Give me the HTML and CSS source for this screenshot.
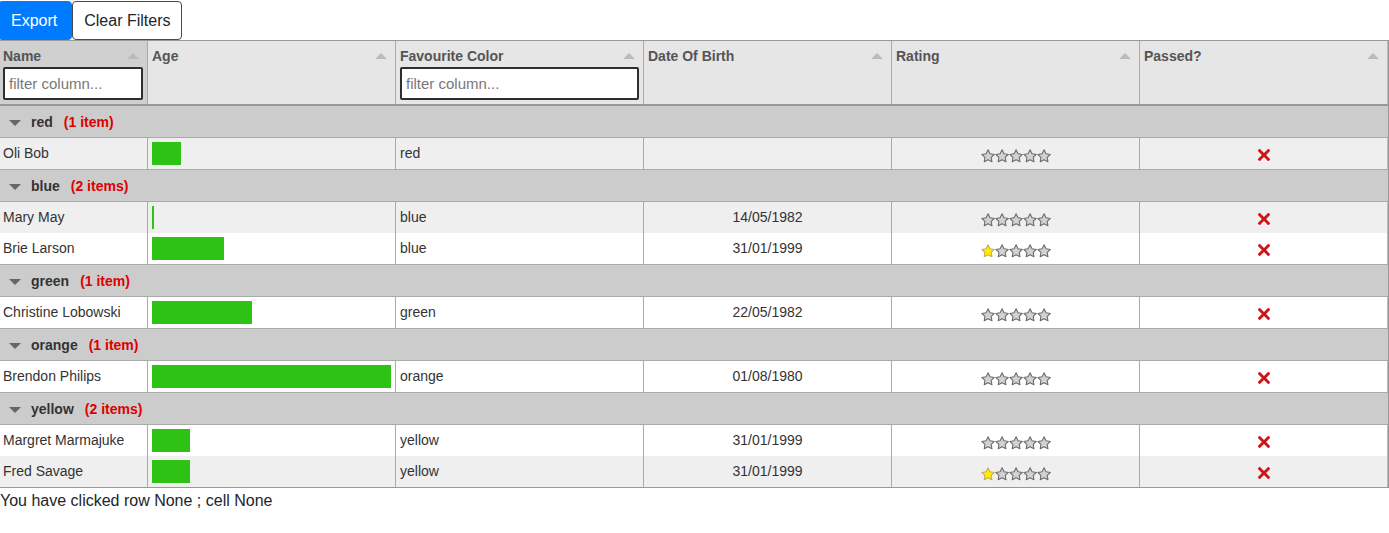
FILE: index.html
```html
<!DOCTYPE html>
<html lang="en">
<head>
<meta charset="utf-8">
<title>Tabulator grouped table</title>
<link rel="stylesheet" href="styles.css">
</head>
<body>
<svg class="defs" width="0" height="0" aria-hidden="true">
  <symbol id="star-off" viewBox="0 0 512 512">
    <polygon fill="#D2D2D2" stroke="#686868" stroke-width="37.6152" stroke-linecap="round" stroke-linejoin="round" points="259.216,29.942 330.27,173.919 489.16,197.007 374.185,309.08 401.33,467.31 259.216,392.612 117.104,467.31 144.25,309.08 29.274,197.007 188.165,173.919"/>
  </symbol>
  <symbol id="star-on" viewBox="0 0 512 512">
    <polygon fill="#FFEA00" stroke="#C1AB60" stroke-width="37.6152" stroke-linecap="round" stroke-linejoin="round" points="259.216,29.942 330.27,173.919 489.16,197.007 374.185,309.08 401.33,467.31 259.216,392.612 117.104,467.31 144.25,309.08 29.274,197.007 188.165,173.919"/>
  </symbol>
  <symbol id="cross" viewBox="0 0 24 24">
    <path fill="#CE1515" d="M22.245,4.015c0.313,0.313,0.313,0.826,0,1.139l-6.276,6.27c-0.313,0.312-0.313,0.826,0,1.14l6.273,6.272c0.313,0.313,0.313,0.826,0,1.14l-2.285,2.277c-0.314,0.312-0.828,0.312-1.142,0l-6.271-6.271c-0.313-0.313-0.828-0.313-1.141,0l-6.276,6.267c-0.313,0.313-0.828,0.313-1.141,0l-2.282-2.28c-0.313-0.313-0.313-0.826,0-1.14l6.278-6.269c0.313-0.312,0.313-0.826,0-1.14L1.709,5.147c-0.314-0.313-0.314-0.827,0-1.14l2.284-2.278C4.308,1.417,4.821,1.417,5.135,1.73L11.405,8c0.314,0.314,0.828,0.314,1.141,0.001l6.276-6.267c0.312-0.312,0.826-0.312,1.141,0L22.245,4.015z"/>
  </symbol>
</svg>

<div class="page">
  <div class="toolbar">
    <button class="btn btn-primary">Export</button>
    <button class="btn btn-outline">Clear Filters</button>
  </div>

  <div class="table">
    <div class="header">
      <div class="hcol hover">
        <div class="htitle"><span>Name</span><span class="sort"></span></div>
        <input class="hfilter" type="text" placeholder="filter column...">
      </div>
      <div class="hcol">
        <div class="htitle"><span>Age</span><span class="sort"></span></div>
      </div>
      <div class="hcol">
        <div class="htitle"><span>Favourite Color</span><span class="sort"></span></div>
        <input class="hfilter" type="text" placeholder="filter column...">
      </div>
      <div class="hcol">
        <div class="htitle"><span>Date Of Birth</span><span class="sort"></span></div>
      </div>
      <div class="hcol">
        <div class="htitle"><span>Rating</span><span class="sort"></span></div>
      </div>
      <div class="hcol">
        <div class="htitle"><span>Passed?</span><span class="sort"></span></div>
      </div>
    </div>

    <!-- red -->
    <div class="group"><span class="gtoggle"></span><span class="gname">red</span><span class="gcount">(1 item)</span></div>
    <div class="row alt last">
      <div class="cell">Oli Bob</div>
      <div class="cell bar-cell"><div class="bar" style="width:12%"></div></div>
      <div class="cell">red</div>
      <div class="cell center"></div>
      <div class="cell center stars">
        <svg class="star"><use href="#star-off"/></svg><svg class="star"><use href="#star-off"/></svg><svg class="star"><use href="#star-off"/></svg><svg class="star"><use href="#star-off"/></svg><svg class="star"><use href="#star-off"/></svg>
      </div>
      <div class="cell center tick"><svg class="cross"><use href="#cross"/></svg></div>
    </div>

    <!-- blue -->
    <div class="group"><span class="gtoggle"></span><span class="gname">blue</span><span class="gcount">(2 items)</span></div>
    <div class="row alt">
      <div class="cell">Mary May</div>
      <div class="cell bar-cell"><div class="bar" style="width:1%"></div></div>
      <div class="cell">blue</div>
      <div class="cell center">14/05/1982</div>
      <div class="cell center stars">
        <svg class="star"><use href="#star-off"/></svg><svg class="star"><use href="#star-off"/></svg><svg class="star"><use href="#star-off"/></svg><svg class="star"><use href="#star-off"/></svg><svg class="star"><use href="#star-off"/></svg>
      </div>
      <div class="cell center tick"><svg class="cross"><use href="#cross"/></svg></div>
    </div>
    <div class="row last">
      <div class="cell">Brie Larson</div>
      <div class="cell bar-cell"><div class="bar" style="width:30%"></div></div>
      <div class="cell">blue</div>
      <div class="cell center">31/01/1999</div>
      <div class="cell center stars">
        <svg class="star"><use href="#star-on"/></svg><svg class="star"><use href="#star-off"/></svg><svg class="star"><use href="#star-off"/></svg><svg class="star"><use href="#star-off"/></svg><svg class="star"><use href="#star-off"/></svg>
      </div>
      <div class="cell center tick"><svg class="cross"><use href="#cross"/></svg></div>
    </div>

    <!-- green -->
    <div class="group"><span class="gtoggle"></span><span class="gname">green</span><span class="gcount">(1 item)</span></div>
    <div class="row last">
      <div class="cell">Christine Lobowski</div>
      <div class="cell bar-cell"><div class="bar" style="width:42%"></div></div>
      <div class="cell">green</div>
      <div class="cell center">22/05/1982</div>
      <div class="cell center stars">
        <svg class="star"><use href="#star-off"/></svg><svg class="star"><use href="#star-off"/></svg><svg class="star"><use href="#star-off"/></svg><svg class="star"><use href="#star-off"/></svg><svg class="star"><use href="#star-off"/></svg>
      </div>
      <div class="cell center tick"><svg class="cross"><use href="#cross"/></svg></div>
    </div>

    <!-- orange -->
    <div class="group"><span class="gtoggle"></span><span class="gname">orange</span><span class="gcount">(1 item)</span></div>
    <div class="row last">
      <div class="cell">Brendon Philips</div>
      <div class="cell bar-cell"><div class="bar" style="width:100%"></div></div>
      <div class="cell">orange</div>
      <div class="cell center">01/08/1980</div>
      <div class="cell center stars">
        <svg class="star"><use href="#star-off"/></svg><svg class="star"><use href="#star-off"/></svg><svg class="star"><use href="#star-off"/></svg><svg class="star"><use href="#star-off"/></svg><svg class="star"><use href="#star-off"/></svg>
      </div>
      <div class="cell center tick"><svg class="cross"><use href="#cross"/></svg></div>
    </div>

    <!-- yellow -->
    <div class="group"><span class="gtoggle"></span><span class="gname">yellow</span><span class="gcount">(2 items)</span></div>
    <div class="row">
      <div class="cell">Margret Marmajuke</div>
      <div class="cell bar-cell"><div class="bar" style="width:16%"></div></div>
      <div class="cell">yellow</div>
      <div class="cell center">31/01/1999</div>
      <div class="cell center stars">
        <svg class="star"><use href="#star-off"/></svg><svg class="star"><use href="#star-off"/></svg><svg class="star"><use href="#star-off"/></svg><svg class="star"><use href="#star-off"/></svg><svg class="star"><use href="#star-off"/></svg>
      </div>
      <div class="cell center tick"><svg class="cross"><use href="#cross"/></svg></div>
    </div>
    <div class="row alt">
      <div class="cell">Fred Savage</div>
      <div class="cell bar-cell"><div class="bar" style="width:16%"></div></div>
      <div class="cell">yellow</div>
      <div class="cell center">31/01/1999</div>
      <div class="cell center stars">
        <svg class="star"><use href="#star-on"/></svg><svg class="star"><use href="#star-off"/></svg><svg class="star"><use href="#star-off"/></svg><svg class="star"><use href="#star-off"/></svg><svg class="star"><use href="#star-off"/></svg>
      </div>
      <div class="cell center tick"><svg class="cross"><use href="#cross"/></svg></div>
    </div>
  </div>

  <div class="status">You have clicked row None ; cell None</div>
</div>
</body>
</html>
```

FILE: styles.css
```css
* {
  box-sizing: border-box;
}

html, body {
  margin: 0;
  padding: 0;
  background: #fff;
}

body {
  font-family: "Liberation Sans", Arial, Helvetica, sans-serif;
  font-size: 16px;
  line-height: 1.5;
  color: #212529;
  overflow: hidden;
}

.defs {
  position: absolute;
  width: 0;
  height: 0;
  overflow: hidden;
}

.page {
  margin-left: -2px;
  width: 1391px;
}

/* toolbar */
.toolbar {
  display: flex;
  padding-top: 1px;
}

.btn {
  font-family: inherit;
  font-size: 16px;
  line-height: 24px;
  height: 39px;
  padding: 6px 12px;
  border-radius: 4px;
  margin: 0;
  cursor: pointer;
}

.btn-primary {
  background: #007bff;
  border: 1px solid #007bff;
  color: #fff;
  padding-right: 14px;
}

.btn-outline {
  background: #fff;
  border: 1px solid #4a4a4a;
  color: #212529;
  padding-left: 11px;
  padding-right: 11px;
}

/* table */
.table {
  border: 1px solid #999;
  background: #fff;
  font-size: 14px;
  line-height: 17px;
  color: #333;
}

.header {
  display: grid;
  grid-template-columns: 149px repeat(5, 248px);
  height: 65px;
  background: #e6e6e6;
  border-bottom: 2px solid #999;
  color: #555;
  font-weight: bold;
}

.hcol {
  border-right: 1px solid #aaa;
  padding: 7px 4px 3px 4px;
  display: flex;
  flex-direction: column;
}

.hcol:last-child {
  border-right: 1px solid #bbb;
}

.hcol.hover {
  background: #d0d0d0;
}

.htitle {
  display: flex;
  justify-content: space-between;
  align-items: center;
  height: 17px;
}

.sort {
  width: 0;
  height: 0;
  border-left: 6px solid transparent;
  border-right: 6px solid transparent;
  border-bottom: 6px solid #bbb;
  margin-right: 4px;
  margin-top: -2px;
}

.hfilter {
  margin-top: 2px;
  width: 100%;
  height: 33px;
  border: 2px solid #2e2e2e;
  border-radius: 2px;
  padding: 0 4px;
  font-family: inherit;
  font-size: 15px;
  font-weight: normal;
  background: #fff;
  color: #333;
}

.hfilter::placeholder {
  color: #777;
}

/* group rows */
.group {
  display: flex;
  align-items: center;
  height: 32px;
  padding-left: 10px;
  padding-top: 1px;
  background: #ccc;
  border-bottom: 1px solid #aaa;
  font-weight: bold;
  color: #333;
}

.gtoggle {
  width: 0;
  height: 0;
  border-left: 6px solid transparent;
  border-right: 6px solid transparent;
  border-top: 6px solid #666;
  margin-right: 10px;
  margin-top: 1px;
}

.gcount {
  color: #d00;
  margin-left: 11px;
}

/* data rows */
.row {
  display: grid;
  grid-template-columns: 149px repeat(5, 248px);
  height: 31px;
  background: #fff;
}

.row.alt {
  background: #efefef;
}

.row.last {
  height: 32px;
  border-bottom: 1px solid #aaa;
}

.cell {
  border-right: 1px solid #aaa;
  padding: 4px;
  display: flex;
  align-items: center;
  white-space: nowrap;
  overflow: hidden;
}

.cell:last-child {
  border-right: 1px solid #bbb;
}

.cell.center {
  justify-content: center;
}

.bar-cell {
  align-items: stretch;
}

.bar {
  background: #2dc214;
  height: 23px;
  min-width: 2px;
}

.stars {
  padding-top: 9px;
}

.star {
  width: 14px;
  height: 14px;
  flex: none;
}

.tick {
  padding-top: 6px;
}

.cross {
  width: 14px;
  height: 14px;
}

.status {
  line-height: 24px;
  font-size: 16px;
  color: #212529;
  padding-left: 2px;
  padding-top: 1px;
}
```
